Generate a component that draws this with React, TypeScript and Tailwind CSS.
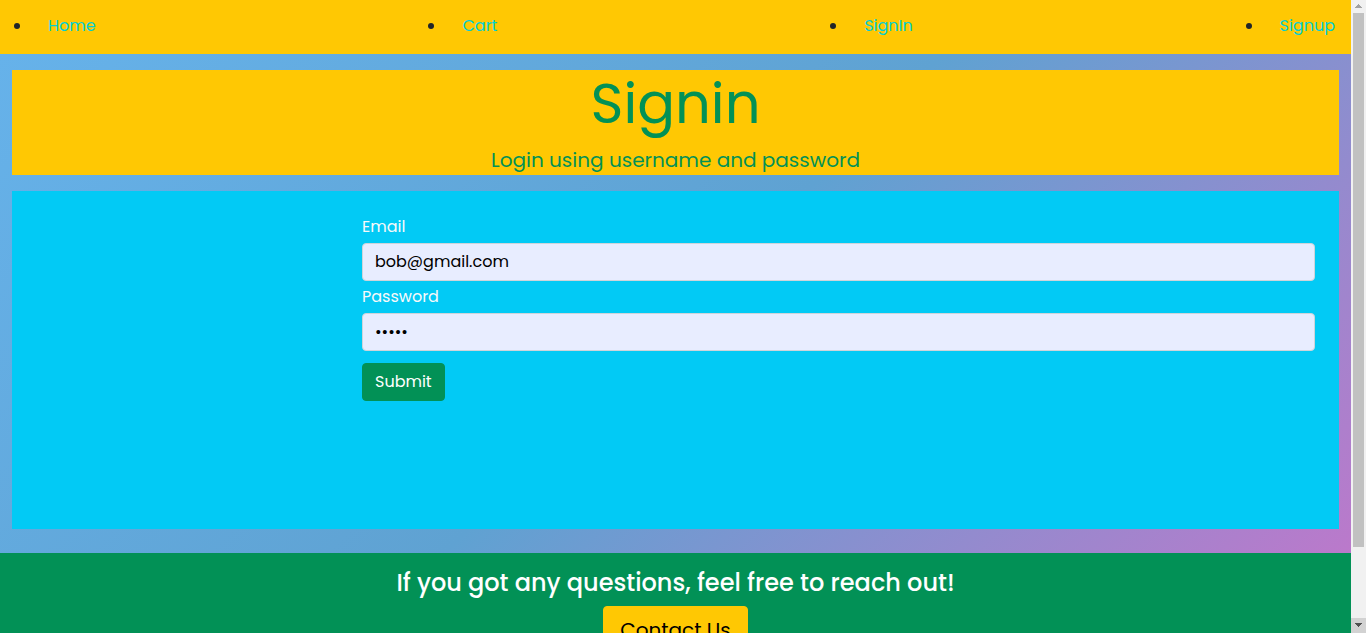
import { useState } from "react";

const links = ["Home", "Cart", "SignIn", "Signup"];

function NavBar() {
  return (
    <nav className="bg-[#ffc803]">
      <ul className="flex list-disc items-center justify-between pt-3.5 pb-4 pl-8 text-[#212529]">
        {links.map((label) => (
          <li key={label} className="px-4">
            <a href="#" className="text-[#03cfd4]">
              {label}
            </a>
          </li>
        ))}
      </ul>
    </nav>
  );
}

function SignInForm() {
  const [email, setEmail] = useState("bob@gmail.com");
  const [password, setPassword] = useState("12345");
  const field =
    "mb-1 w-full rounded border border-[#ced4da] bg-[#e8edff] px-3 py-1.5 leading-6 text-black outline-none";
  return (
    <form className="mr-6 ml-[350px] flex flex-col items-start pt-6" onSubmit={(e) => e.preventDefault()}>
      <label htmlFor="email" className="mb-1 leading-6 text-[#f8f9fa]">
        Email
      </label>
      <input id="email" type="email" className={field} value={email} onChange={(e) => setEmail(e.target.value)} />
      <label htmlFor="password" className="mb-1 leading-6 text-[#f8f9fa]">
        Password
      </label>
      <input
        id="password"
        type="password"
        className={field}
        value={password}
        onChange={(e) => setPassword(e.target.value)}
      />
      <button type="submit" className="mt-2 rounded border border-[#029156] bg-[#029156] px-3 py-1.5 text-white">
        Submit
      </button>
    </form>
  );
}

function ScrollTrack() {
  return (
    <div className="flex w-[15px] shrink-0 flex-col items-center bg-[#f1f1f1]" aria-hidden="true">
      <svg className="h-[13px] w-[15px] shrink-0" viewBox="0 0 15 13" fill="#a3a3a3" shapeRendering="crispEdges">
        <path d="M7 4h1v1h1v1h1v1h1v1H4V7h1V6h1V5h1z" />
      </svg>
      <div className="min-h-0 w-[11px] flex-[534] bg-[#c1c1c1]" />
      <div className="min-h-0 flex-[71]" />
      <svg
        className="h-[15px] w-[15px] shrink-0 bg-[#d2d2d2]"
        viewBox="0 0 15 15"
        fill="#505050"
        shapeRendering="crispEdges"
      >
        <path d="M4 5h7v1h-1v1H9v1H8v1H7V8H6V7H5V6H4z" />
      </svg>
    </div>
  );
}

export default function App() {
  return (
    <div className="flex h-screen overflow-hidden font-['Poppins','Inter',sans-serif] text-base">
      <div className="min-w-0 flex-1 overflow-hidden">
        <NavBar />
        <main className="bg-[linear-gradient(135deg,#66b2ea_0%,#5fa2d2_51%,#bb79cb_100%)] px-3 pt-4 pb-6">
          <header className="mb-4 bg-[#ffc803] text-center text-[#029156]">
            <h1 className="mb-2 text-[56px] leading-[67px]">Signin</h1>
            <p className="text-xl leading-[30px]">Login using username and password</p>
          </header>
          <section className="min-h-[338px] bg-[#02caf5]">
            <SignInForm />
          </section>
        </main>
        <footer className="flex flex-col items-center bg-[#029156] pt-4 pb-4">
          <h2 className="mb-[9px] text-2xl leading-[28px] font-medium text-white">
            If you got any questions, feel free to reach out!
          </h2>
          <a
            href="#"
            className="rounded border border-[#ffc803] bg-[#ffc803] px-4 py-2 text-xl leading-[30px] text-black"
          >
            Contact Us
          </a>
        </footer>
      </div>
      <ScrollTrack />
    </div>
  );
}
